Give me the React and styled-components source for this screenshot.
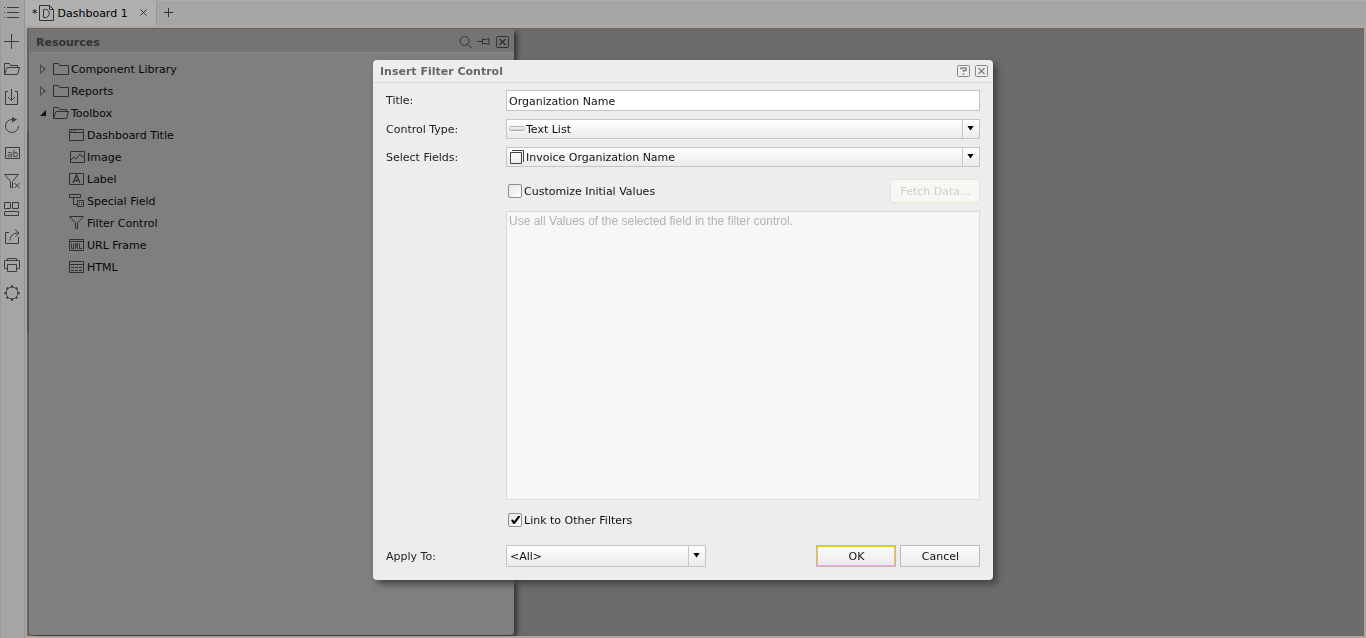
import React, { useState } from 'react'
import styled, { createGlobalStyle } from 'styled-components'

const icons = {
    menu: <path d="M0 2.5h1M3 2.5h12M0 7.5h1M3 7.5h12M0 12.5h1M3 12.5h12" />,
    plus: <path d="M7.5 1v15M0 8.5h15" />,
    folderOpen: <path d="M.5 13.5v-11h5l1 2h7v2M.5 13.5l2.5-7h12.5l-2 7z" />,
    folder: <path d="M.5 13.5v-11h5l1 2h9v9z" />,
    save: <path d="M4 2.5H1.5v13h12v-13H11M7.5 0v11.500M4 8l3.500 3.500L11 8" />,
    refresh: (
        <>
            <path d="M9 2.500H8A6.500 6.500 0 1 0 14.500 9" />
            <path d="M8 0l5 2.500-5 3z" fill="currentColor" stroke="none" />
        </>
    ),
    textField: (
        <>
            <path d="M1.500 2.500h14v11h-14z" />
            <text x="3" y="12" fontSize="9">ab</text>
        </>
    ),
    clearFilter: <path d="M.5 1.500h14L8.500 8.500M.5 1.500l6 7v6h2V9M10.500 10l5 5M15.500 10l-5 5" />,
    layout: <path d="M.5 1.500h6v6h-6zM8.500 1.500h6v6h-6zM.5 10.500h14v4H.5z" />,
    share: <path d="M5 3.500H1.500v11h13V8M6 11.500C6 7 9 4 14.500 4M11 .5L15 4l-3.500 3.500" />,
    print: <path d="M3.500 3V1.500h9V3M3.500 11.500h-3v-8h15v8h-3M3.500 7.500h9v7h-9z" />,
    gear: (
        <>
            <circle cx="8" cy="8" r="6" />
            <path d="M8 .3v2M8 13.700v2M.3 8h2M13.700 8h2M2.600 2.600l1.200 1.200M12.200 12.200l1.200 1.200M13.400 2.600l-1.200 1.200M3.800 12.200l-1.200 1.200" strokeWidth="2" />
        </>
    ),
    dashboardTitle: <path d="M.5 2.500h14v11H.5zM.5 5.500h14M2 4h1M4 4h1M6 4h1" />,
    image: <path d="M1.500 2.500h14v11h-14zM2 11l3-3 2 2 4-5 2 3 2-1" />,
    label: (
        <>
            <path d="M.5 2.500h14v11H.5z" />
            <path d="M4 12L7.500 4 11 12M5 9.500h5" strokeWidth="1.300" />
        </>
    ),
    specialField: <path d="M.5 1.500h11v3H.5zM4.500 5v6.500H8M8.500 7.500h6v6h-6zM10 9.500h1M12 9.500h1M10 11.500h1M12 11.500h1" />,
    filter: <path d="M.5 1.500h14L8.500 8v6l-2-1V8z" />,
    url: (
        <>
            <path d="M.5 2.500h14v11H.5zM.5 4.500h14" />
            <path d="M2.500 6.500v5h2v-5M6.500 12V6.500h2v2.500h-2M7.500 9l1.500 3M10.500 6.500v5H13" />
        </>
    ),
    html: <path d="M.5 2.500h14v11H.5zM.5 5.500h14M2 8.500h3M6 8.500h3M10 8.500h3M2 11.500h3M6 11.500h3M10 11.500h3" />,
    page: (
        <>
            <path d="M.5 .5h10l4 4v11H.5zM10.500 .5v4h4" />
            <path d="M4.500 4.500v8h2c5 0 5-8 0-8z" />
        </>
    ),
    search: (
        <>
            <circle cx="5.500" cy="7" r="4.500" />
            <path d="M9 10.500L12.500 14" />
        </>
    ),
    pin: <path d="M0 7.500h5M5.500 4v7M6 5.500h3M6 9.500h3M9 5.500l3-1v6l-3-1" />,
    close: <path d="M4.500 4.500l6 6M10.500 4.500l-6 6" />,
    boxClose: (
        <>
            <rect x="1.500" y="2.500" width="12" height="11" rx="1" />
            <path d="M4.500 5l6 6M10.500 5l-6 6" strokeWidth="1.500" />
        </>
    ),
    boxHelp: (
        <>
            <rect x="1.500" y="2.500" width="12" height="11" rx="1" />
            <path d="M5 6.500V5h5v2.500H7.500V9M7.500 10.500V12" strokeWidth="1.500" />
        </>
    ),
    textList: (
        <>
            <rect x=".5" y="5.500" width="15" height="4" rx="1" stroke="#b5b5b5" fill="#eee" />
            <path d="M2 8.500h12" stroke="#ccc" />
        </>
    ),
    field: <path d="M1.500 3.500h11v11h-11zM3 1.500h11.500V13" />,
}

function Icon({ name }) {
    return (
        <Glyph viewBox="0 0 16 16" aria-hidden="true">
            {icons[name]}
        </Glyph>
    )
}

const tools = [
    ['menu', 'Menu'],
    ['plus', 'New'],
    ['folderOpen', 'Open'],
    ['save', 'Save'],
    ['refresh', 'Refresh'],
    ['textField', 'Parameters'],
    ['clearFilter', 'Clear filters'],
    ['layout', 'Layout'],
    ['share', 'Export'],
    ['print', 'Print'],
    ['gear', 'Settings'],
]

const toolbox = [
    ['dashboardTitle', 'Dashboard Title'],
    ['image', 'Image'],
    ['label', 'Label'],
    ['specialField', 'Special Field'],
    ['filter', 'Filter Control'],
    ['url', 'URL Frame'],
    ['html', 'HTML'],
]

function Select({ id, icon, options, short }) {
    return (
        <SelectBox $short={short}>
            {icon && <Icon name={icon} />}
            <SelectInput id={id}>
                {options.map((option) => (
                    <option key={option}>{option}</option>
                ))}
            </SelectInput>
            <SelectArrow />
        </SelectBox>
    )
}

function Resources() {
    return (
        <Panel>
            <PanelHeader>
                <PanelTitle>Resources</PanelTitle>
                <IconButton aria-label="Search"><Icon name="search" /></IconButton>
                <IconButton aria-label="Pin"><Icon name="pin" /></IconButton>
                <IconButton aria-label="Close panel"><Icon name="boxClose" /></IconButton>
            </PanelHeader>
            <Tree>
                <TreeItem><Expander /><Icon name="folder" />Component Library</TreeItem>
                <TreeItem><Expander /><Icon name="folder" />Reports</TreeItem>
                <TreeItem><Expander $open /><Icon name="folderOpen" />Toolbox</TreeItem>
                {toolbox.map(([icon, label]) => (
                    <TreeItem key={label} $nested><Icon name={icon} />{label}</TreeItem>
                ))}
            </Tree>
        </Panel>
    )
}

function FilterDialog() {
    const [title, setTitle] = useState('Organization Name')
    const [customize, setCustomize] = useState(false)
    const [linked, setLinked] = useState(true)

    return (
        <Dialog role="dialog" aria-labelledby="dialog-title">
            <DialogHeader>
                <DialogTitle id="dialog-title">Insert Filter Control</DialogTitle>
                <IconButton aria-label="Help"><Icon name="boxHelp" /></IconButton>
                <IconButton aria-label="Close dialog"><Icon name="boxClose" /></IconButton>
            </DialogHeader>
            <Form onSubmit={(e) => e.preventDefault()}>
                <Label htmlFor="title">Title:</Label>
                <TextInput id="title" value={title} onChange={(e) => setTitle(e.target.value)} />

                <Label htmlFor="type">Control Type:</Label>
                <Select id="type" icon="textList" options={['Text List']} />

                <Label htmlFor="fields">Select Fields:</Label>
                <Select id="fields" icon="field" options={['Invoice Organization Name']} />

                <ValuesRow>
                    <CheckLabel>
                        <Checkbox checked={customize} onChange={(e) => setCustomize(e.target.checked)} />
                        Customize Initial Values
                    </CheckLabel>
                    <FetchButton disabled={!customize}>Fetch Data...</FetchButton>
                </ValuesRow>

                <ValuesArea
                    aria-label="Initial values"
                    disabled={!customize}
                    defaultValue="Use all Values of the selected field in the filter control."
                />

                <LinkRow>
                    <CheckLabel>
                        <Checkbox checked={linked} onChange={(e) => setLinked(e.target.checked)} />
                        Link to Other Filters
                    </CheckLabel>
                </LinkRow>

                <Label htmlFor="apply">Apply To:</Label>
                <Footer>
                    <Select id="apply" short options={['<All>']} />
                    <Button $primary>OK</Button>
                    <Button>Cancel</Button>
                </Footer>
            </Form>
        </Dialog>
    )
}

function App() {
    return (
        <Page>
            <GlobalStyle />
            <Sidebar>
                {tools.map(([icon, label]) => (
                    <ToolButton key={icon} aria-label={label}><Icon name={icon} /></ToolButton>
                ))}
            </Sidebar>
            <Main>
                <TabBar>
                    <Tab>
                        *<Icon name="page" />
                        <TabName>Dashboard 1</TabName>
                        <IconButton aria-label="Close tab"><Icon name="close" /></IconButton>
                    </Tab>
                    <AddTab aria-label="Add tab"><AddIcon viewBox="0 0 9 9"><path d="M4.500 0v9M0 4.500h9" /></AddIcon></AddTab>
                </TabBar>
                <Canvas>
                    <Resources />
                </Canvas>
            </Main>
            <Overlay>
                <FilterDialog />
            </Overlay>
        </Page>
    )
}

export default App

const GlobalStyle = createGlobalStyle`
    * {
        box-sizing: border-box;
    }
    body {
        margin: 0;
        font: 11px/17px "DejaVu Sans", Verdana, sans-serif;
        color: #111;
        overflow: hidden;
    }
    button, input, select {
        font: inherit;
        color: inherit;
    }
    button {
        padding: 0;
    }
`

const Glyph = styled.svg`
    width: 16px;
    height: 16px;
    flex: none;
    fill: none;
    stroke: currentColor;
    text {
        fill: currentColor;
        stroke: none;
    }
`

const Page = styled.div`
    display: flex;
    height: 100vh;
    background-color: #a5a5a5;
`

const Sidebar = styled.nav`
    width: 25px;
    flex: none;
    border-right: 1px solid #9297a0;
    border-left: 1px solid #9a9a9a;
`

const ToolButton = styled.button`
    display: flex;
    width: 100%;
    height: 28px;
    padding-left: 3px;
    align-items: center;
    border: 0;
    background: none;
    color: #3c3c3c;
    &:first-child {
        height: 27px;
        padding-bottom: 1px;
    }
`

const Main = styled.main`
    flex: 1;
    display: flex;
    flex-direction: column;
    min-width: 0;
`

const TabBar = styled.div`
    display: flex;
    height: 26px;
    border-top: 1px solid #adadad;
    border-bottom: 1px solid #adadad;
`

const Tab = styled.div`
    display: flex;
    align-items: center;
    gap: 1px;
    width: 132px;
    padding: 0 3px 0 7px;
    border-right: 1px solid #969696;
    background-color: #b0b0b0;
    color: #000;
    ${Glyph} {
        color: #333;
    }
`

const TabName = styled.span`
    flex: 1;
    padding-left: 2px;
    white-space: nowrap;
`

const IconButton = styled.button`
    display: flex;
    width: 18px;
    height: 18px;
    align-items: center;
    justify-content: center;
    border: 0;
    background: none;
    color: inherit;
`

const AddTab = styled(IconButton)`
    width: 23px;
    height: 23px;
    color: #333;
`

const AddIcon = styled.svg`
    width: 9px;
    height: 9px;
    stroke: currentColor;
`

const Canvas = styled.section`
    flex: 1;
    display: flex;
    border: 2px solid #b0a39b;
    background: linear-gradient(#686868 102px, #4b5c60 102px, #4b5c60 306px, #686868 306px) 0 0 / 2px 100% no-repeat #6b6b6b;
    overflow: hidden;
    padding: 1px 0 1px 2px;
`

const Panel = styled.aside`
    width: 485px;
    border-radius: 3px;
    background-color: #7f7f7f;
    box-shadow: 3px 3px 5px #333;
`

const PanelHeader = styled.header`
    display: flex;
    align-items: center;
    height: 24px;
    padding: 3px 2px 0 7px;
    border-bottom: 1px solid #868686;
    border-radius: 3px 3px 0 0;
    background-color: #747474;
    color: #333;
`

const PanelTitle = styled.h2`
    flex: 1;
    margin: 0;
    font-size: 11px;
`

const Tree = styled.ul`
    margin: 0;
    padding: 5px 0 0 10px;
    list-style: none;
`

const TreeItem = styled.li`
    display: flex;
    align-items: center;
    gap: 2px;
    height: 22px;
    padding-left: ${(props) => (props.$nested ? 30 : 0)}px;
    color: #080808;
    ${Glyph} {
        color: #303030;
    }
`

const Expander = styled.span`
    width: 12px;
    padding-left: 1px;
    &::before {
        content: "";
        display: block;
        width: 6px;
        height: ${(props) => (props.$open ? 6 : 10)}px;
        background-color: ${(props) => (props.$open ? '#111' : '#4a4a4a')};
        clip-path: ${(props) =>
            props.$open
                ? 'polygon(100% 0, 100% 100%, 0 100%)'
                : 'polygon(evenodd, 0 0, 100% 50%, 0 100%, 0 0, 1px 2px, 1px 8px, 4px 50%, 1px 2px)'};
    }
`

const Overlay = styled.div`
    position: fixed;
    inset: 0;
    display: flex;
    align-items: center;
    justify-content: center;
    padding-top: 2px;
`

const Dialog = styled.div`
    width: 620px;
    border-radius: 4px;
    background-color: #ededed;
    box-shadow: 4px 4px 6px #444;
`

const DialogHeader = styled.header`
    display: flex;
    align-items: center;
    height: 23px;
    padding: 0 2px 0 7px;
    border-bottom: 1px solid #dadada;
    color: #666;
    ${Glyph} {
        color: #888;
    }
`

const DialogTitle = styled.h1`
    flex: 1;
    margin: 0;
    font-size: 11px;
`

const Form = styled.form`
    display: grid;
    grid-template-columns: 120px 1fr;
    row-gap: 8px;
    align-items: center;
    padding: 7px 13px 13px;
`

const Label = styled.label`
    color: #222;
`

const TextInput = styled.input`
    width: 100%;
    height: 21px;
    padding: 1px 2px 0;
    border: 1px solid #c5c5c5;
    background-color: #fff;
    outline: none;
`

const SelectBox = styled.div`
    display: flex;
    align-items: center;
    width: ${(props) => (props.$short ? '200px' : '100%')};
    height: ${(props) => (props.$short ? 22 : 20)}px;
    padding-left: 2px;
    border: 1px solid #c5c5c5;
    background: linear-gradient(#fff, #ebebeb);
    ${Glyph} {
        color: #444;
    }
`

const SelectInput = styled.select`
    appearance: none;
    flex: 1;
    min-width: 0;
    height: 100%;
    padding: 1px 1px 0;
    border: 0;
    background: none;
    outline: none;
`

const SelectArrow = styled.span`
    width: 17px;
    height: 100%;
    display: flex;
    align-items: center;
    padding: 0 0 2px 4px;
    border-left: 1px solid #c5c5c5;
    pointer-events: none;
    &::before {
        content: "";
        width: 7px;
        height: 5px;
        background-color: #000;
        clip-path: polygon(0 0, 100% 0, 50% 100%);
    }
`

const ValuesRow = styled.div`
    grid-column: 2;
    display: flex;
    align-items: center;
    justify-content: space-between;
    margin-top: 4px;
`

const CheckLabel = styled.label`
    display: flex;
    align-items: center;
    gap: 2px;
    padding-left: 2px;
`

const Checkbox = styled.input.attrs({ type: 'checkbox' })`
    appearance: none;
    width: 14px;
    height: 14px;
    margin: 0;
    padding: 2px;
    border: 1px solid #8e8e8e;
    border-radius: 2px;
    background: linear-gradient(135deg, #e5e5e5, #fff);
    &:checked::before {
        content: "";
        display: block;
        width: 9px;
        height: 8px;
        background-color: #000;
        clip-path: polygon(0 50%, 22% 45%, 35% 65%, 78% 0, 100% 0, 100% 14%, 42% 100%, 25% 100%);
    }
`

const Button = styled.button.attrs({ type: 'button' })`
    width: 80px;
    height: 22px;
    padding: 1px 0 0 1px;
    border: 1px solid #bbb;
    background: linear-gradient(#fcfcfc, #ebebeb);
    box-shadow: ${(props) => (props.$primary ? 'inset 0 0 0 1px #f9be4b' : 'none')};
`

const FetchButton = styled(Button)`
    width: 90px;
    height: 24px;
    border-color: #e5e4dc;
    border-radius: 3px;
    background: #f8f7f2;
    color: #cfcfcb;
`

const ValuesArea = styled.textarea`
    grid-column: 2;
    display: block;
    width: 100%;
    height: 289px;
    margin: 0;
    padding: 1px 2px;
    border: 1px solid #dadada;
    background-color: #f7f7f7;
    color: #b2b2b2;
    font: 12px/16px "Liberation Sans", Arial, sans-serif;
    resize: none;
`

const LinkRow = styled.div`
    grid-column: 2;
    display: flex;
    align-items: center;
    height: 24px;
    margin-bottom: 5px;
`

const Footer = styled.div`
    display: flex;
    align-items: center;
    gap: 4px;
    ${SelectBox} {
        margin-right: auto;
    }
`
